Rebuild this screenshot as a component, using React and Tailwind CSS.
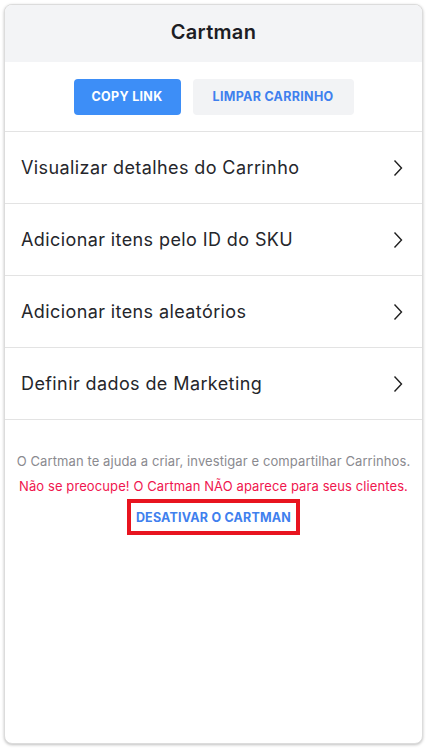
import React from 'react';

const ACOES = [
  'Visualizar detalhes do Carrinho',
  'Adicionar itens pelo ID do SKU',
  'Adicionar itens aleatórios',
  'Definir dados de Marketing',
];

function Chevron() {
  return (
    <svg width="12" height="18" viewBox="0 0 12 18" fill="none" className="shrink-0">
      <path d="M2.5 1.5 L9.5 9 L2.5 16.5" stroke="#1f1f1f" strokeWidth="1.4" />
    </svg>
  );
}

export default function App() {
  return (
    <div className="w-[427px] h-[749px] bg-white p-1" style={{ fontFamily: 'Inter, "Noto Sans", sans-serif' }}>
      <div className="h-[740px] rounded-lg border border-[#dcdcdc] shadow-[0_1px_3px_rgba(0,0,0,0.25)] bg-white overflow-hidden flex flex-col">
        {/* Cabeçalho */}
        <header className="h-[57px] bg-[#f3f4f6] flex items-center justify-center pb-1">
          <h1 className="text-[20px] font-semibold text-[#1c1d24] tracking-[0.3px]">Cartman</h1>
        </header>

        {/* Botões */}
        <div className="flex justify-center gap-3 pt-[17px] pb-4 border-b border-[#e3e3e3]">
          <button className="h-9 w-[107px] rounded bg-[#3d8ef7] text-white text-[12.5px] font-bold tracking-[0.3px]">
            COPY LINK
          </button>
          <button className="h-9 w-[161px] rounded bg-[#f2f3f5] text-[#3f80ee] text-[12.5px] font-bold tracking-[0.3px]">
            LIMPAR CARRINHO
          </button>
        </div>

        {/* Ações */}
        {ACOES.map((acao) => (
          <div key={acao} className="h-[72px] flex items-center justify-between pl-4 pr-[18px] border-b border-[#e3e3e3]">
            <span className="text-[18px] text-[#25262b] tracking-[0.4px]">{acao}</span>
            <Chevron />
          </div>
        ))}

        {/* Rodapé */}
        <div className="flex flex-col items-center pt-[29px] text-[13px] leading-[25px]">
          <p className="text-[#8a8a8f] tracking-[0.1px]">O Cartman te ajuda a criar, investigar e compartilhar Carrinhos.</p>
          <p className="text-[#f0154e] tracking-[0.1px]">Não se preocupe! O Cartman NÃO aparece para seus clientes.</p>
          <div className="border-4 border-[#e8141f] px-[5px] h-[36px] flex items-center">
            <span className="text-[12.5px] font-bold text-[#3f80ee] tracking-[0.2px]">DESATIVAR O CARTMAN</span>
          </div>
        </div>
      </div>
    </div>
  );
}
